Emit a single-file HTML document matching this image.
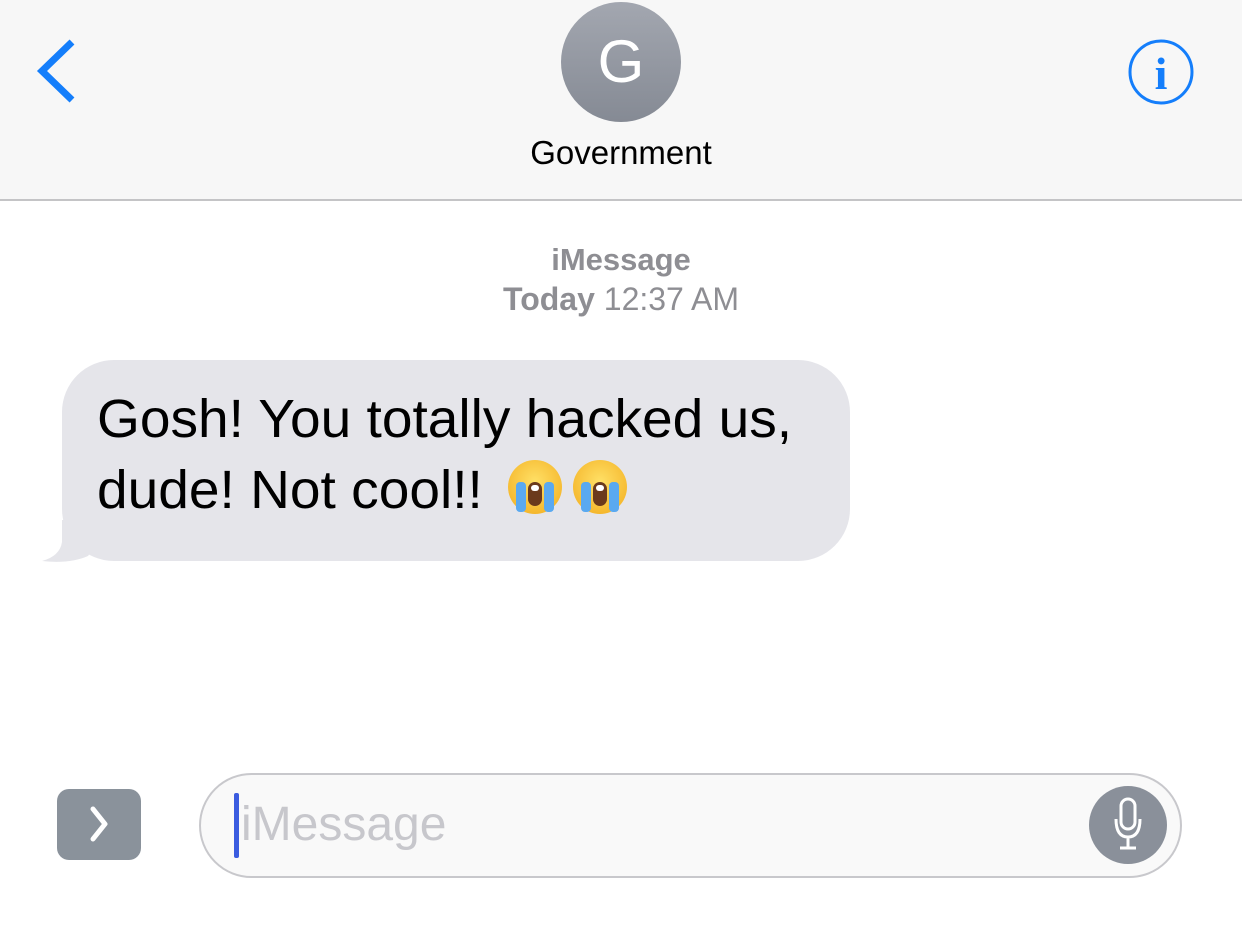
<!DOCTYPE html>
<html><head><meta charset="utf-8"><style>
*{margin:0;padding:0;box-sizing:border-box}
body{width:1242px;height:935px;background:#fff;position:relative;overflow:hidden;font-family:"Liberation Sans",sans-serif}
.hdr{position:absolute;left:0;top:0;width:1242px;height:201px;background:#f7f7f7;border-bottom:2px solid #c4c4c6}
.av{position:absolute;left:561px;top:2px;width:120px;height:120px;border-radius:50%;background:linear-gradient(#a3a7b0,#858a94);color:#fff;font-size:60px;text-align:center;line-height:120px}
.name{position:absolute;left:0;width:1242px;top:134px;text-align:center;font-size:33px;color:#000}
.meta{position:absolute;left:0;width:1242px;text-align:center;color:#8e8e93;font-size:32px}
.bub{position:absolute;left:62px;top:360px;width:788px;height:201px;background:#e5e5ea;border-radius:52px}
.txt{position:absolute;left:97px;font-size:54px;color:#000;white-space:nowrap;transform-origin:left top;transform:scaleX(1.02)}
.emo{position:absolute;width:54px;height:54px;border-radius:50%;background:radial-gradient(circle at 50% 40%,#ffe066,#f5b82e 75%,#e89a1e)}
.emo:before,.emo:after{content:"";position:absolute;top:22px;width:10px;height:30px;background:#5aa9f0;border-radius:4px}
.emo:before{left:8px}.emo:after{right:8px}
.emo i{position:absolute;left:20px;top:22px;width:14px;height:24px;border-radius:7px;background:#6b3a1c;z-index:2}
.emo i:after{content:"";position:absolute;left:3px;top:3px;width:8px;height:6px;background:#fff;border-radius:3px}
</style></head><body>
<div class="hdr">
<svg style="position:absolute;left:34px;top:38px" width="44" height="66" viewBox="0 0 44 66"><path d="M38 4 L8 33 L38 62" fill="none" stroke="#147efb" stroke-width="7"/></svg>
<div class="av">G</div>
<div class="name">Government</div>
<svg style="position:absolute;left:1127px;top:38px" width="68" height="68" viewBox="0 0 68 68"><circle cx="34" cy="34" r="31" fill="none" stroke="#147efb" stroke-width="3"/><text x="34" y="51" text-anchor="middle" font-family="Liberation Serif,serif" font-size="46" font-weight="bold" fill="#147efb">i</text></svg>
</div>
<div class="meta" style="top:242px;font-weight:bold;font-size:31px">iMessage</div>
<div class="meta" style="top:281px"><b>Today</b> 12:37 AM</div>
<svg style="position:absolute;left:40px;top:520px" width="60" height="45" viewBox="0 0 60 45"><path d="M22 0 L22 22 Q20 36 2 41 Q30 44 48 36 L60 20 L60 0Z" fill="#e5e5ea"/></svg>
<div class="bub"></div>
<div class="txt" style="top:388px">Gosh! You totally hacked us,</div>
<div class="txt" style="top:459px">dude! Not cool!!</div>
<div class="emo" style="left:508px;top:460px"><i></i></div>
<div class="emo" style="left:573px;top:460px"><i></i></div>
<div style="position:absolute;left:57px;top:789px;width:84px;height:71px;border-radius:12px;background:#8a929b"></div>
<svg style="position:absolute;left:85px;top:803px" width="30" height="42" viewBox="0 0 30 42"><path d="M8 6 L20 21 L8 36" fill="none" stroke="#fff" stroke-width="5" stroke-linecap="round" stroke-linejoin="round"/></svg>
<div style="position:absolute;left:199px;top:773px;width:983px;height:105px;border-radius:53px;border:2.5px solid #c8c8cc;background:#f9f9f9"></div>
<div style="position:absolute;left:234px;top:793px;width:5px;height:65px;border-radius:2px;background:#3b5ce0"></div>
<div style="position:absolute;left:241px;top:797px;font-size:48px;color:#c7c7cc">iMessage</div>
<div style="position:absolute;left:1089px;top:786px;width:78px;height:78px;border-radius:50%;background:#8a909a"></div>
<svg style="position:absolute;left:1108px;top:795px" width="40" height="60" viewBox="0 0 40 60"><rect x="13" y="4" width="14" height="30" rx="7" fill="none" stroke="#fff" stroke-width="3"/><path d="M8 24 Q8 42 20 42 Q32 42 32 24 M20 42 V53 M12 53 H28" fill="none" stroke="#fff" stroke-width="3"/></svg>
</body></html>
